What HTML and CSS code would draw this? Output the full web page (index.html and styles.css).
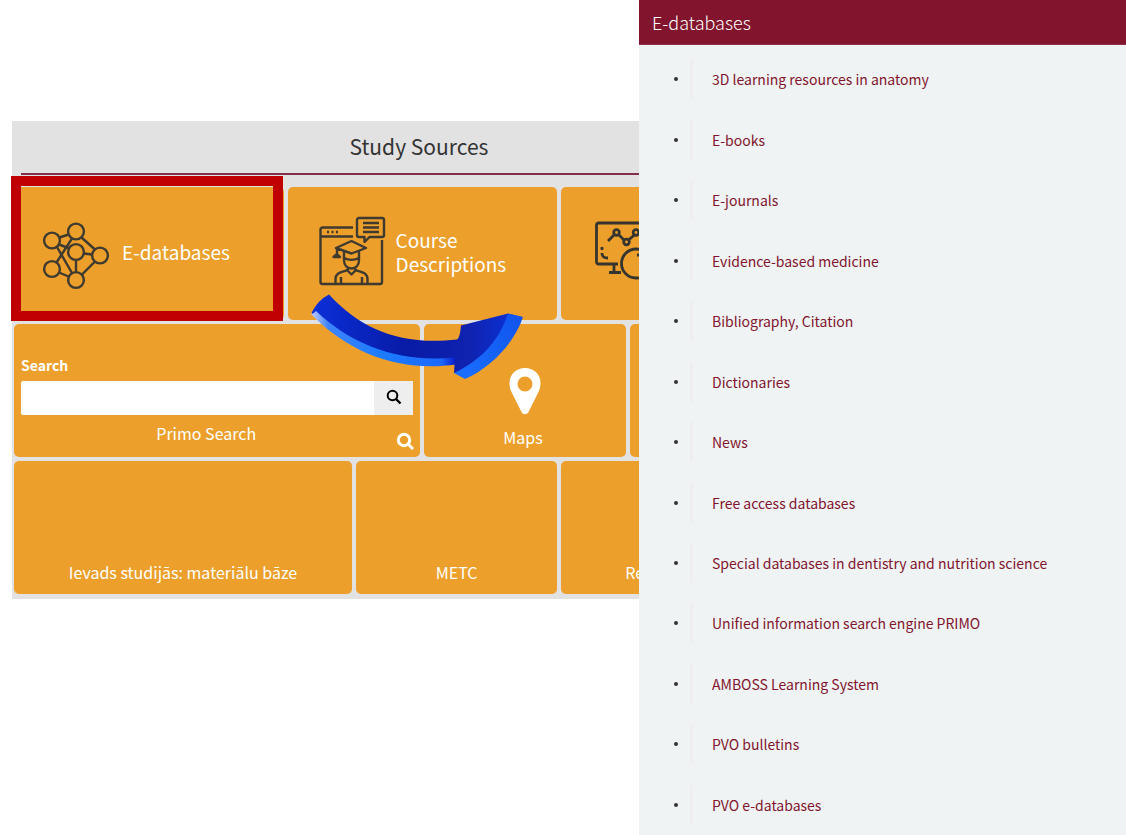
FILE: index.html
```
<!DOCTYPE html>
<html lang="en">
<head>
<meta charset="utf-8">
<title>Study Sources</title>
<link rel="stylesheet" href="styles.css">
</head>
<body>
<div class="page">
  <main class="stage">
    <section class="sources">
      <div class="board">
        <header class="board-head">
          <h1 class="board-title">Study Sources</h1>
        </header>
        <div class="tiles">
          <a class="tile tile-row span-4" href="#databases">
            <svg class="icon-network" viewBox="0 0 68 68" width="68" height="68" fill="none" stroke="#3f3a30" stroke-width="2.4" aria-hidden="true">
              <circle cx="10" cy="18.500" r="7.900"/><circle cx="34" cy="9.500" r="7.900"/><circle cx="34" cy="30" r="7.900"/><circle cx="58" cy="33.500" r="7.900"/><circle cx="10" cy="47" r="7.900"/><circle cx="34" cy="58" r="7.900"/>
              <path d="M17.500 15.500l9-3M17 22.500l9.500 3.500M15 25l15 26M14.500 40.500L30 16.500M17 50.500l9.500 4M34 38v12M42 31.500l8 1M39.500 15.500L53 27.500M40 52.500l13-13"/>
            </svg>
            <span class="tile-name">E-databases</span>
            <span class="marker"></span>
          </a>
          <a class="tile tile-row tile-course span-4" href="#courses">
            <svg class="icon-course" viewBox="0 0 68 70" width="68" height="70" fill="none" stroke="#3f3a30" stroke-width="2.400" stroke-linejoin="round" aria-hidden="true">
              <path d="M35 11.500H4.500a2 2 0 0 0-2 2V66a2 2 0 0 0 2 2H62a2 2 0 0 0 2-2V24M2.500 20.500H35"/>
              <path d="M9 16h2M13.500 16h2M18 16h2"/>
              <path d="M41 2h23a2 2 0 0 1 2 2v15a2 2 0 0 1-2 2H51.500L46.500 26v-5H41a2 2 0 0 1-2-2V4a2 2 0 0 1 2-2z"/>
              <path d="M45 7h16M45 11.500h16M45 16h16"/>
              <path d="M18 32l15.500-7L48 32l-14.500 5.500zM19 32v8M15.500 41l3.500-3 3 3zM26 35v9c0 6 3.500 8.500 7.500 8.500s7.500-2.500 7.500-8.500v-9M26 42c5 2.500 10 2.500 15 0"/>
              <path d="M30 51.500v3.500l3.500 3.500L37 55v-3.500M30 54c-8 2.500-12.500 3-12.500 9v5M37 54c8 2.500 12.500 3 12.500 9v5M23 61v7M44 61v7"/>
            </svg>
            <span class="tile-name">Course<br>Descriptions</span>
          </a>
          <a class="tile tile-row tile-report span-4" href="#reports" aria-label="Reports">
            <svg class="icon-report" viewBox="0 0 76 60" width="76" height="60" fill="none" stroke="#35342f" stroke-width="2.800" stroke-linejoin="round" aria-hidden="true">
              <path d="M24 44H4.500a2 2 0 0 1-2-2V5a2 2 0 0 1 2-2H68v18M20 44v8M15 52.500h12"/>
              <path d="M14 21l6-6M24.500 14.500l5.500 5.500M35 19.500l6-5M8 27v3M8 33c0 3.500 1.500 5 6 5"/>
              <circle cx="22.500" cy="12.500" r="2.800"/><circle cx="32.500" cy="22" r="2.800"/><circle cx="42" cy="12.500" r="2.800"/><circle cx="42" cy="43.500" r="14.500"/><path d="M43 35h4"/>
            </svg>
          </a>

          <form class="tile tile-search span-6" action="#search">
            <label class="search-label" for="primo">Search</label>
            <div class="search-box">
              <input class="search-input" id="primo" type="text">
              <button class="search-button" type="submit" aria-label="Search">
                <svg viewBox="0 0 16 16" width="16" height="16" fill="none" stroke="#000" aria-hidden="true"><circle cx="6.500" cy="6.500" r="4.800" stroke-width="2"/><path d="M10 10l4.500 4.500" stroke-width="2.400"/></svg>
              </button>
            </div>
            <span class="search-name">Primo Search</span>
            <svg class="search-glass" viewBox="0 0 18 18" width="18" height="18" fill="none" stroke="#fff" stroke-width="3" aria-hidden="true"><circle cx="8" cy="8" r="5.700"/><path d="M12 12l5 5"/></svg>
          </form>
          <a class="tile tile-foot tile-maps span-3" href="#maps">
            <svg viewBox="0 0 32 47" width="32" height="47" aria-hidden="true"><path fill="#fff" fill-rule="evenodd" d="M16 0C7 0 0.500 6.500 0.500 15c0 4 1 7 2.500 10l9.500 19c1.500 3 5.500 3 7 0l9.500-19c1.500-3 2.500-6 2.500-10C31.500 6.500 25 0 16 0zm0 8.500a7.500 7.500 0 1 1 0 15 7.500 7.500 0 0 1 0-15z"/></svg>
            <span>Maps</span>
          </a>
          <span class="tile span-3"></span>

          <a class="tile tile-foot span-5" href="#intro">Ievads studijās: materiālu bāze</a>
          <a class="tile tile-foot span-3" href="#metc">METC</a>
          <a class="tile tile-foot tile-left span-4" href="#re">Re</a>
        </div>
      </div>
    </section>
    <svg class="arrow" viewBox="311 294 213 86" width="213" height="86" aria-hidden="true">
      <defs>
        <linearGradient id="top" x1="0" x2="1"><stop offset="0" stop-color="#0b2fd8"/><stop offset="0.450" stop-color="#071ba6"/><stop offset="0.750" stop-color="#0f22b0"/><stop offset="1" stop-color="#0b35dc"/></linearGradient>
        <linearGradient id="side" x1="0" x2="1"><stop offset="0" stop-color="#c5ccff"/><stop offset="0.120" stop-color="#3d83ff"/><stop offset="0.500" stop-color="#1c7bff"/><stop offset="0.900" stop-color="#1c68ff"/><stop offset="1" stop-color="#0718c8"/></linearGradient>
        <linearGradient id="head" x1="0" y1="1" x2="1" y2="0"><stop offset="0" stop-color="#1a70ff"/><stop offset="1" stop-color="#1053ed"/></linearGradient>
      </defs>
      <path fill="url(#side)" d="M311 314L316 309C350 342 402 364 456 356V364.500C403 372 352 356 311 314z"/>
      <path fill="url(#top)" d="M329 294.500C361 329 400 346 457 339.500Q460 338 461 325.500L508 313.500L522 317C517 337 492 365 465 373L454 373L455 357.500C402 363 354 347 316 311Q311 316 312 312Q318 300 329 294.500z"/>
      <path fill="url(#head)" d="M508 313.500L523 317C514 344 490 368 465 379L454 373C482 360 500 339 508 313.500z"/>
    </svg>
  </main>

  <aside class="drawer">
    <h2 class="drawer-title">E-databases</h2>
    <ul class="links">
      <li class="links-item"><a class="link" href="#1">3D learning resources in anatomy</a></li>
      <li class="links-item"><a class="link" href="#2">E-books</a></li>
      <li class="links-item"><a class="link" href="#3">E-journals</a></li>
      <li class="links-item"><a class="link" href="#4">Evidence-based medicine</a></li>
      <li class="links-item"><a class="link" href="#5">Bibliography, Citation</a></li>
      <li class="links-item"><a class="link" href="#6">Dictionaries</a></li>
      <li class="links-item"><a class="link" href="#7">News</a></li>
      <li class="links-item"><a class="link" href="#8">Free access databases</a></li>
      <li class="links-item"><a class="link" href="#9">Special databases in dentistry and nutrition science</a></li>
      <li class="links-item"><a class="link" href="#10">Unified information search engine PRIMO</a></li>
      <li class="links-item"><a class="link" href="#11">AMBOSS Learning System</a></li>
      <li class="links-item"><a class="link" href="#12">PVO bulletins</a></li>
      <li class="links-item"><a class="link" href="#13">PVO e-databases</a></li>
    </ul>
  </aside>
</div>
</body>
</html>
```
FILE: styles.css
```
* { box-sizing: border-box; }
body {
  margin: 0;
  background: #fff;
  font-family: "Noto Sans CJK SC", "Noto Sans", sans-serif;
  font-size: 14px;
  line-height: 24px;
}
a { color: inherit; text-decoration: none; }

.page {
  display: grid;
  grid-template-columns: 639fr 487fr;
  min-height: 100vh;
}

.stage {
  position: relative;
  min-width: 0;
  overflow: hidden;
  padding: 121px 0 0 12px;
}
.sources { background: #e2e2e2; padding-bottom: 5px; }

/* The board is wider than its column and runs on beneath the drawer. */
.board { width: 130.6%; padding-left: 2px; }
.board-head {
  margin: 0 0 12px 7px;
  padding: 13px 14px 14px 0;
  border-bottom: 2px solid #842f48;
}
.board-title {
  margin: 0;
  font-size: 21px;
  line-height: 25px;
  font-weight: 400;
  text-align: center;
  color: #333;
}

.tiles {
  display: grid;
  grid-template-columns: repeat(12, minmax(0, 1fr));
  grid-auto-rows: 133px;
  gap: 4px;
}
.tile {
  position: relative;
  border-radius: 5px;
  background: #ec9f2b;
  color: #fff;
}
.span-3 { grid-column: span 3; }
.span-4 { grid-column: span 4; }
.span-5 { grid-column: span 5; }
.span-6 { grid-column: span 6; }

.tile-row { display: flex; align-items: center; padding-left: 28px; gap: 12px; }
.tile-course { padding-left: 30px; gap: 10px; }
.tile-report { padding-left: 33px; }
.tile-name { padding-bottom: 3px; font-size: 19px; line-height: 24px; }
.icon-network, .icon-course, .icon-report { flex: none; }
.icon-report { margin-bottom: 8px; }
.icon-course { margin-bottom: 6px; }
.icon-network { margin-top: 4px; }

.marker {
  position: absolute;
  z-index: 1;
  inset: -11px 1px -1px -3px;
  border: 10px solid #c00000;
}

.tile-search { padding: 29px 7px 0; }
.search-label { display: block; font-weight: 700; }
.search-box { display: flex; margin-top: 4px; height: 34px; }
.search-input { flex: 1; min-width: 0; border: 0; border-radius: 2px 0 0 2px; padding: 0 10px; background: #fff; }
.search-button {
  display: grid;
  place-items: center;
  width: 39px;
  border: 0;
  padding: 0 0 3px;
  background: #eee;
}
.search-name { display: block; margin-top: 6px; padding-right: 22px; font-size: 16px; text-align: center; }
.search-glass { position: absolute; right: 6px; bottom: 7px; }

.tile-foot {
  display: flex;
  flex-direction: column;
  align-items: center;
  justify-content: flex-end;
  gap: 10px;
  padding-bottom: 10px;
  font-size: 16px;
  white-space: nowrap;
}
.tile-maps { padding: 0 4px 8px 0; }
.tile-maps svg { margin-left: 4px; }
.tile-left { align-items: flex-start; padding-left: 64px; }

.arrow { position: absolute; left: 311px; top: 294px; }

.drawer { display: flex; flex-direction: column; background: #eff3f4; }
.drawer-title {
  margin: 0;
  padding: 10px 13px;
  border-bottom: 1px solid #92304b;
  background: #82152d;
  color: #fff;
  font-size: 18px;
  line-height: 24px;
  font-weight: 300;
}
.links {
  flex: 1;
  display: flex;
  flex-direction: column;
  margin: 0;
  padding: 4px 0 0 35px;
  list-style: none;
}
.links-item { flex: 1; display: flex; align-items: center; gap: 12px; }
.links-item::before { content: ""; width: 4px; height: 4px; border-radius: 50%; background: #333; }
.link {
  border-left: 3px solid #efeeee;
  padding: 8px 19px;
  color: #82152d;
}
```
